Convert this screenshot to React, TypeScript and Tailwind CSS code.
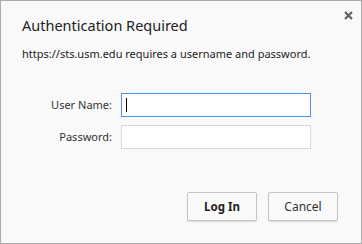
import React from 'react'

const font = { fontFamily: '"Noto Sans", "Open Sans", Arial, sans-serif' }

export default function App() {
  return (
    <div
      className="relative w-[362px] h-[244px] border border-[#acacac] bg-[#f9f9f9] text-[#222]"
      style={font}
    >
      <button className="absolute left-[341px] top-[8px] w-[12px] h-[12px] flex items-center justify-center text-[#5c5c5c]">
        <svg width="9" height="9" viewBox="0 0 9 9">
          <path d="M1 1 L8 8 M8 1 L1 8" stroke="currentColor" strokeWidth="2" />
        </svg>
      </button>

      <div className="pl-[21px] pt-[14px]">
        <h1 className="text-[14.5px] leading-[20px] text-[#222]">Authentication Required</h1>
        <p className="mt-[11px] text-[11px] leading-[16px] text-[#222]">
          https://sts.usm.edu requires a username and password.
        </p>
      </div>

      <div className="mt-[31px] flex flex-col gap-[8px]">
        <div className="flex items-center">
          <label className="w-[112px] pr-[1px] text-right text-[11px] text-[#333]">User Name:</label>
          <div className="ml-[8px] w-[190px] h-[24px] border border-[#4d90fe] bg-white flex items-center pl-[4px]">
            <span className="w-[1px] h-[14px] bg-black" />
          </div>
        </div>
        <div className="flex items-center">
          <label className="w-[112px] pr-[1px] text-right text-[11px] text-[#333]">Password:</label>
          <div className="ml-[8px] w-[190px] h-[24px] border border-[#d9d9d9] bg-white" />
        </div>
      </div>

      <div className="mt-[43px] flex justify-end gap-[11px] pr-[23px]">
        <button className="w-[70px] h-[29px] rounded-[2px] border border-[#c4c4c4] bg-[#fafafa] shadow-[0_1px_1px_rgba(0,0,0,0.12)] text-[11.5px] font-bold text-[#222]">
          Log In
        </button>
        <button className="w-[70px] h-[29px] rounded-[2px] border border-[#c4c4c4] bg-[#fafafa] shadow-[0_1px_1px_rgba(0,0,0,0.12)] text-[12px] text-[#333]">
          Cancel
        </button>
      </div>
    </div>
  )
}
